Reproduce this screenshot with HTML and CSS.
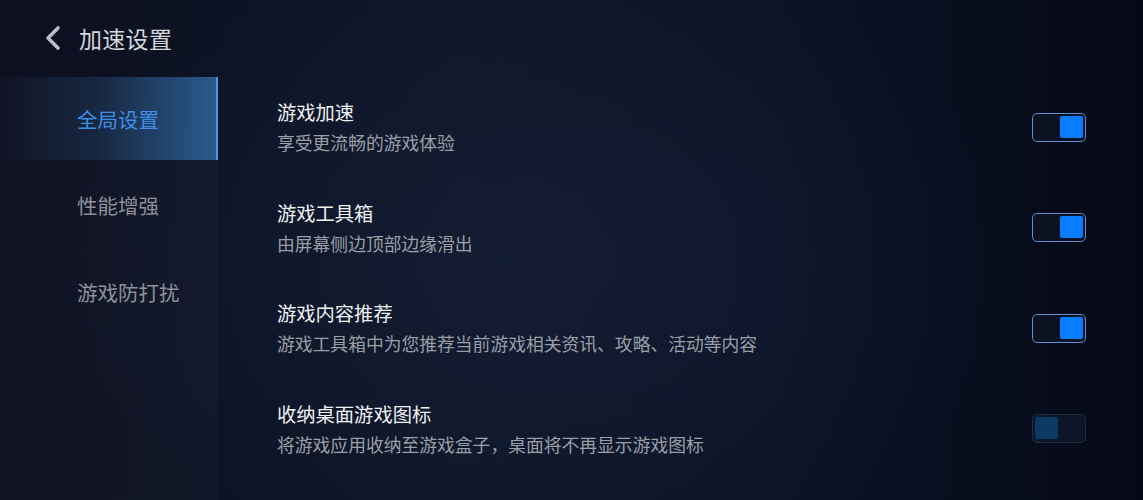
FILE: index.html
```html
<!DOCTYPE html>
<html lang="zh-CN">
<head>
<meta charset="utf-8">
<title>加速设置</title>
<link rel="stylesheet" href="styles.css">
</head>
<body>
<div class="app">
  <header class="header">
    <svg class="back" width="18" height="26" viewBox="0 0 18 26"><polyline points="14,3 4,13 14,23" fill="none" stroke="#b9bdc4" stroke-width="3.6" stroke-linecap="round" stroke-linejoin="round"/></svg>
    <span class="title">加速设置</span>
  </header>
  <div class="body">
    <nav class="sidebar">
      <div class="nav-item active">全局设置</div>
      <div class="nav-item">性能增强</div>
      <div class="nav-item">游戏防打扰</div>
    </nav>
    <main class="main">
      <div class="row">
        <div class="text">
          <div class="row-title">游戏加速</div>
          <div class="row-sub">享受更流畅的游戏体验</div>
        </div>
        <div class="toggle on"><span class="knob"></span></div>
      </div>
      <div class="row">
        <div class="text">
          <div class="row-title">游戏工具箱</div>
          <div class="row-sub">由屏幕侧边顶部边缘滑出</div>
        </div>
        <div class="toggle on"><span class="knob"></span></div>
      </div>
      <div class="row">
        <div class="text">
          <div class="row-title">游戏内容推荐</div>
          <div class="row-sub">游戏工具箱中为您推荐当前游戏相关资讯、攻略、活动等内容</div>
        </div>
        <div class="toggle on"><span class="knob"></span></div>
      </div>
      <div class="row">
        <div class="text">
          <div class="row-title">收纳桌面游戏图标</div>
          <div class="row-sub">将游戏应用收纳至游戏盒子，桌面将不再显示游戏图标</div>
        </div>
        <div class="toggle off"><span class="knob"></span></div>
      </div>
    </main>
  </div>
</div>
</body>
</html>
```
FILE: styles.css
```css
html, body {
  margin: 0;
  padding: 0;
}
body {
  width: 1143px;
  height: 500px;
  overflow: hidden;
  font-family: "Noto Sans CJK SC", "Noto Sans", sans-serif;
  background:
    radial-gradient(ellipse 480px 320px at 540px 260px, rgba(24,36,62,0.5), rgba(24,36,62,0) 100%),
    linear-gradient(90deg, #0c1020 0%, #0f1628 40%, #0c1326 68%, #050917 100%);
}
.app {
  display: flex;
  flex-direction: column;
  height: 500px;
}
.header {
  height: 77px;
  display: flex;
  align-items: center;
  padding-left: 44px;
  box-sizing: border-box;
}
.back {
  margin-right: 17px;
  margin-top: -2px;
}
.title {
  font-size: 23px;
  color: #d4d6da;
  letter-spacing: 0.3px;
  margin-top: -2px;
}
.body {
  display: flex;
  flex: 1;
}
.sidebar {
  width: 218px;
  flex-shrink: 0;
  display: flex;
  flex-direction: column;
  gap: 3.5px;
  background: rgba(255,255,255,0.018);
}
.nav-item {
  height: 83px;
  display: flex;
  align-items: center;
  padding-left: 77px;
  font-size: 20.5px;
  color: #8d9199;
  box-sizing: border-box;
}
.nav-item.active {
  color: #3f8ee6;
  background: linear-gradient(90deg, rgba(40,80,125,0) 0%, rgba(40,85,135,0.28) 45%, rgba(48,105,165,0.82) 100%);
  border-right: 2px solid #4f96de;
}
.main {
  flex: 1;
  display: flex;
  flex-direction: column;
  padding-left: 59px;
  padding-right: 57px;
}
.row {
  height: 100.5px;
  display: flex;
  align-items: center;
  justify-content: space-between;
}
.row-title {
  font-size: 19.3px;
  line-height: 30px;
  color: #f0f1f3;
}
.row-sub {
  font-size: 17.8px;
  line-height: 30px;
  color: #9a9ea6;
}
.toggle {
  width: 54px;
  height: 29px;
  box-sizing: border-box;
  border-radius: 5px;
  padding: 2px;
  display: flex;
  background: #0b1322;
}
.toggle.on {
  border: 1.5px solid #5d8fd2;
  justify-content: flex-end;
}
.toggle.off {
  border: 1.5px solid #1d2d44;
  justify-content: flex-start;
  background: #0d1626;
}
.knob {
  width: 23px;
  height: 22px;
  border-radius: 2px;
}
.toggle.on .knob {
  background: #0a7dff;
}
.toggle.off .knob {
  background: #0c3866;
}
```
